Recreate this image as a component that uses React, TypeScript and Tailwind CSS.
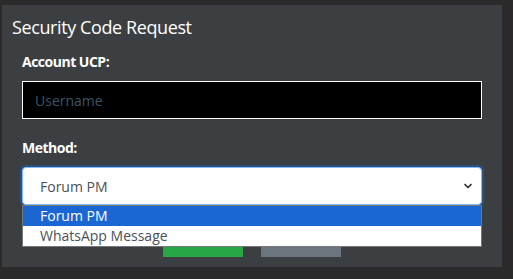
import { ChevronDown } from "lucide-react"

const font = { fontFamily: '"Open Sans", "Noto Sans", sans-serif' }

export default function App() {
  return (
    <div className="w-[513px] h-[279px] bg-[#2b2a2a] pt-[5px] pl-[2px] overflow-hidden" style={font}>
      <div className="w-[500px] h-[262px] bg-[#3c3f42] pt-[10px]">
        <h1 className="pl-[10px] text-[18px] leading-[24px] tracking-[-0.4px] text-white">Security Code Request</h1>

        <div className="px-[20px] pt-[13px]">
          <label className="block text-[14px] leading-[20px] font-bold tracking-[-0.5px] text-white">Account UCP:</label>
          <div className="mt-[9px] h-[38px] w-[460px] border border-white bg-black flex items-center px-[12px]">
            <span className="text-[14px] text-[#3f5366]">Username</span>
          </div>

          <label className="block mt-[19px] text-[14px] leading-[20px] font-bold tracking-[-0.5px] text-white">Method:</label>

          {/* select with open list */}
          <div className="relative mt-[9px]">
            <div className="h-[38px] w-[460px] rounded-[4px] bg-white border border-[#80bdff] shadow-[0_0_0_2px_rgba(38,88,150,0.7)] flex items-center justify-between pl-[17px] pr-[7px]">
              <span className="text-[14px] text-[#495057]">Forum PM</span>
              <ChevronDown className="w-[12px] h-[12px] text-[#333]" strokeWidth={3.5} />
            </div>

            <div className="mt-[42px] flex gap-[18px] pl-[141px]">
              <div className="w-[80px] h-[10px] bg-[#28a745]" />
              <div className="w-[80px] h-[10px] bg-[#6c757d]" />
            </div>

            <div className="absolute left-0 top-[38px] w-[460px] bg-white border border-[#767676] text-[14px]">
              <div className="h-[20px] leading-[20px] pl-[17px] bg-[#1a66d2] text-white">Forum PM</div>
              <div className="h-[20px] leading-[20px] pl-[17px] text-[#495057]">WhatsApp Message</div>
            </div>
          </div>
        </div>
      </div>
    </div>
  )
}
